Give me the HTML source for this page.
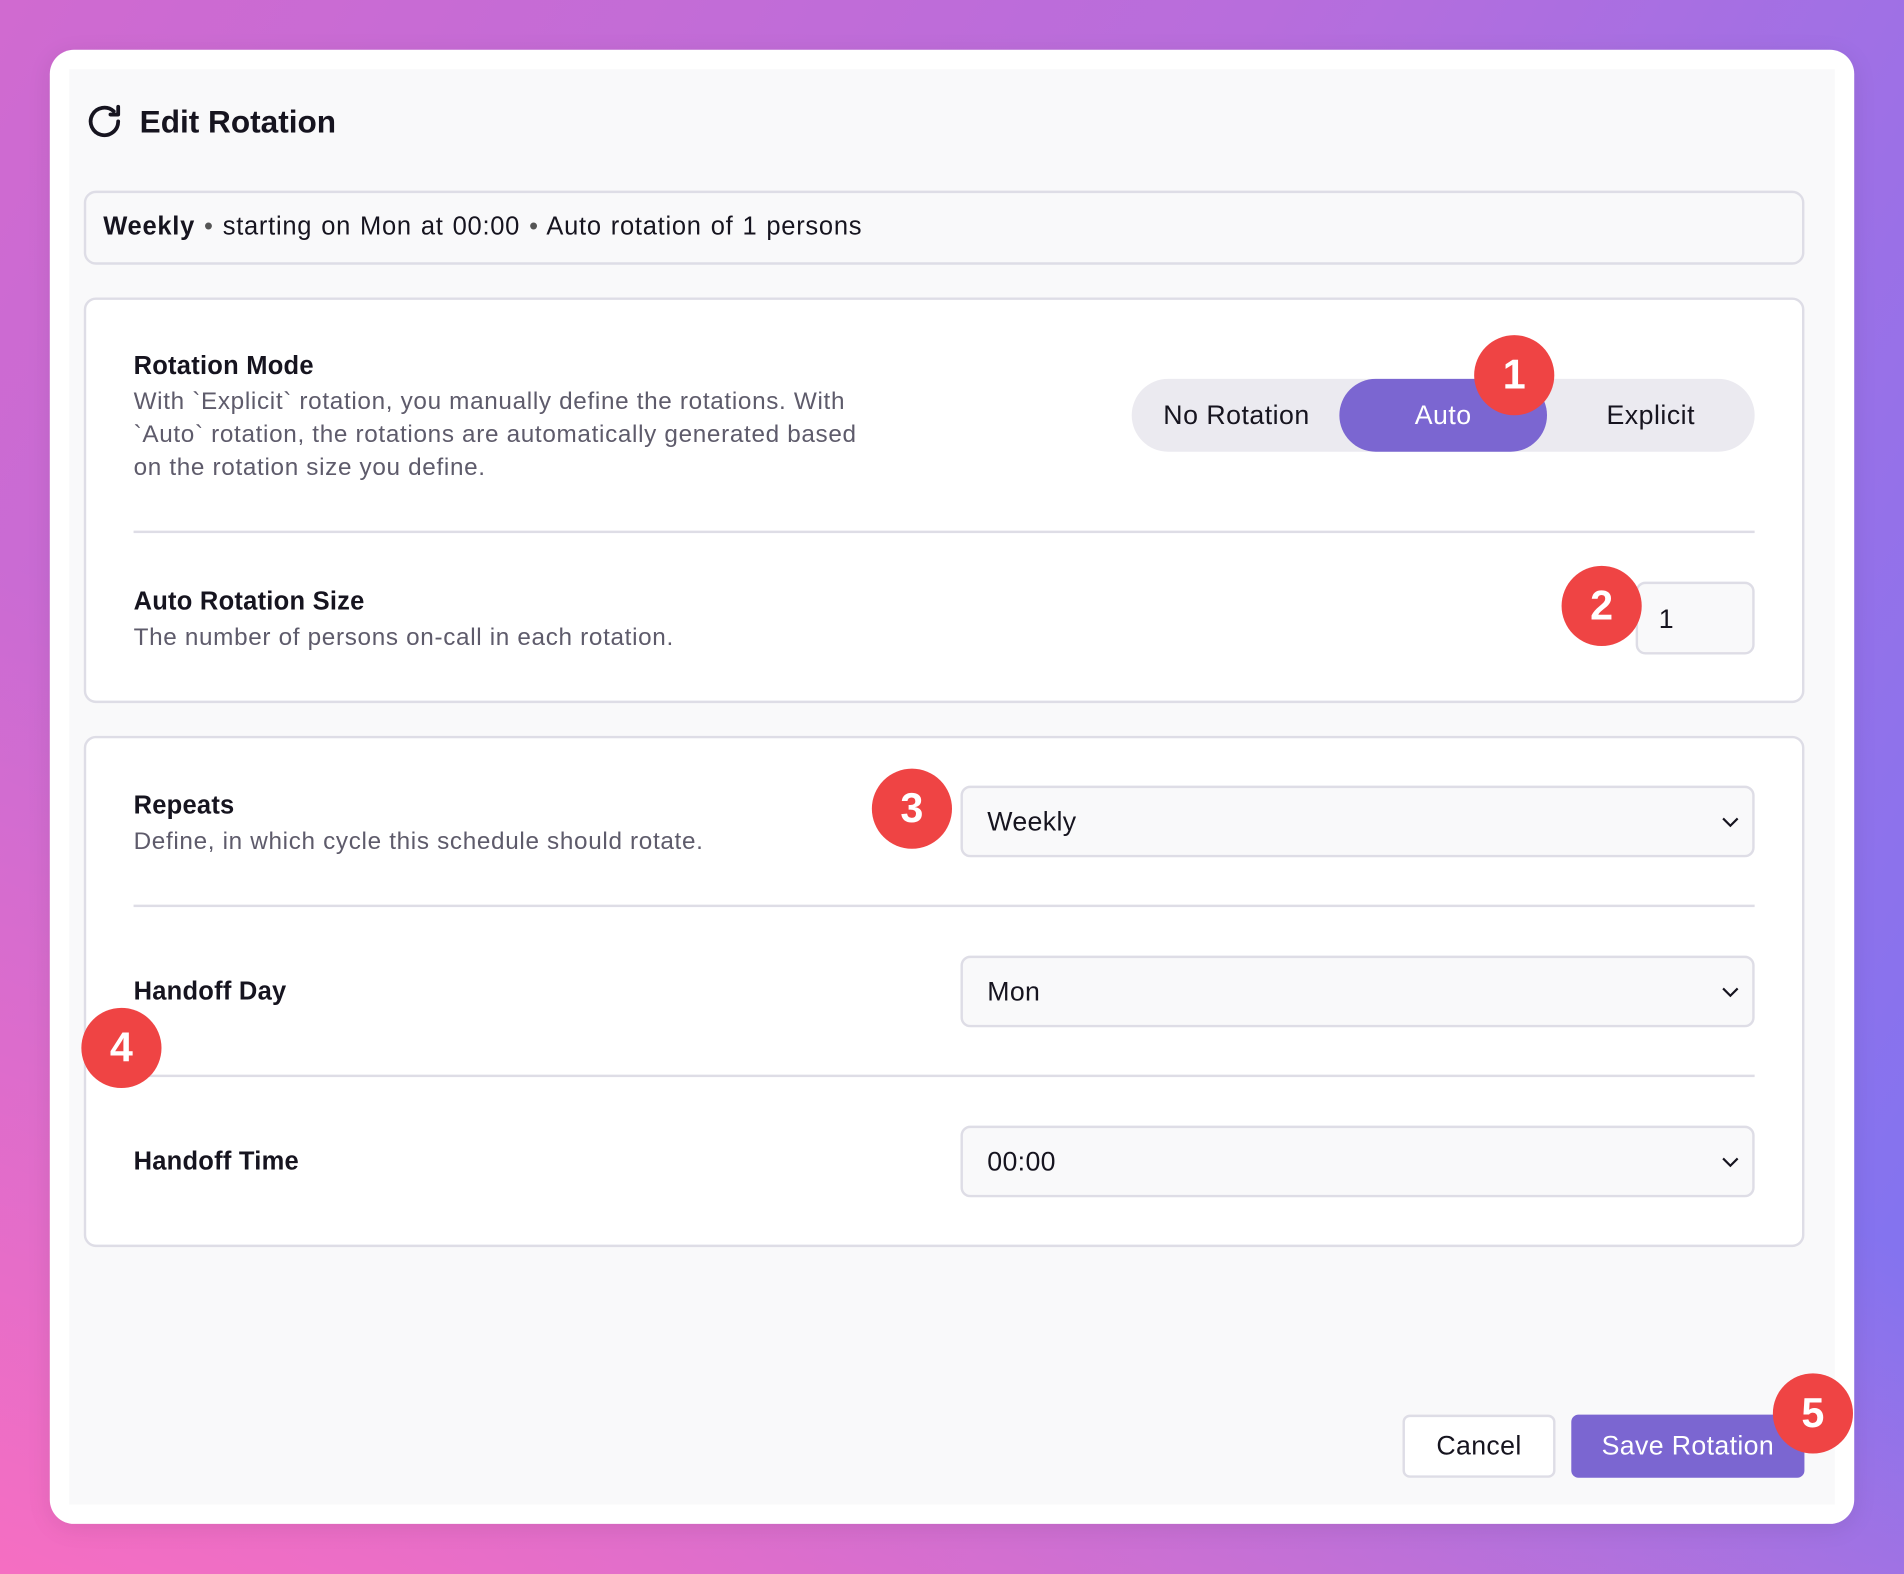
<!DOCTYPE html>
<html><head><meta charset="utf-8"><style>
*{box-sizing:border-box;margin:0;padding:0}
html,body{width:1904px;height:1574px;overflow:hidden}
body{background:linear-gradient(120deg,#d06ad0 0%,#b86ddc 45%,#7c74f2 100%);font-family:"Liberation Sans",sans-serif;color:#16141f;position:relative}
.bg2{position:absolute;inset:0;background:linear-gradient(20deg,rgba(255,110,190,.85) 0%,rgba(255,110,190,0) 45%)}
#s{position:absolute;left:0;top:0;width:1568px;height:1296px;transform:scale(1.21429);transform-origin:0 0}
.card{position:absolute;left:41px;top:41px;width:1486px;height:1214px;background:#fff;border-radius:20px;box-shadow:0 4px 20px rgba(0,0,0,.08)}
.panel{position:absolute;left:57px;top:57px;width:1454px;height:1182px;background:#f9f9fa}
.a{position:absolute}
.box{position:absolute;background:#fff;border:2px solid #dedde6;border-radius:10px}
.lbl{font-weight:bold;font-size:21px;letter-spacing:0.2px}
.desc{font-size:20px;color:#5e5b6b;line-height:27px;letter-spacing:0.55px}
.hr{position:absolute;height:2px;background:#dedde6;left:110px;width:1335px}
.sel{position:absolute;left:791px;width:654px;height:59px;border:2px solid #dedde6;border-radius:8px;background:#f9f9fa;font-size:22px;padding:15px 0 0 20px;letter-spacing:0.3px}
.sel svg{position:absolute;right:10px;top:20px}
.badge{position:absolute;width:66px;height:66px;border-radius:50%;background:#ef4444;color:#fff;font-weight:bold;font-size:34px;text-align:center;line-height:66px}
</style></head><body><div class="bg2"></div>
<div id="s">
<div class="card"></div><div class="panel"></div>
<svg class="a" style="left:69px;top:83px" width="34" height="34" viewBox="0 0 24 24" fill="none" stroke="#16141f" stroke-width="2.2" stroke-linecap="round" stroke-linejoin="round"><path d="M20 12a8 8 0 1 1-2.6-5.9"/><path d="M20 3.5v4.5h-4.5"/></svg>
<div class="a" style="left:115px;top:85px;font-size:26px;font-weight:bold">Edit Rotation</div>
<div class="box" style="left:69px;top:157px;width:1417px;height:61px;background:#f9f9fa;padding:16px 0 0 14px;font-size:21px;letter-spacing:0.6px;word-spacing:1px"><b>Weekly</b> <span style="color:#555">•</span> starting on Mon at 00:00 <span style="color:#555">•</span> Auto rotation of 1 persons</div>
<div class="box" style="left:69px;top:245px;width:1417px;height:334px"></div>
<div class="a lbl" style="left:110px;top:290px">Rotation Mode</div>
<div class="a desc" style="left:110px;top:318px;white-space:nowrap">With `Explicit` rotation, you manually define the rotations. With<br>`Auto` rotation, the rotations are automatically generated based<br>on the rotation size you define.</div>
<div class="a" style="left:932px;top:312px;width:513px;height:60px;background:#ebeaf0;border-radius:30px;font-size:22px;letter-spacing:0.4px">
<div class="a" style="left:26px;top:17px">No Rotation</div>
<div class="a" style="left:171px;top:0;width:171px;height:60px;background:#7b66d1;border-radius:30px;color:#fff;text-align:center;line-height:60px">Auto</div>
<div class="a" style="left:391px;top:17px">Explicit</div></div>
<div class="hr" style="top:437px"></div>
<div class="a lbl" style="left:110px;top:484px">Auto Rotation Size</div>
<div class="a desc" style="left:110px;top:512px">The number of persons on-call in each rotation.</div>
<div class="a" style="left:1347px;top:479px;width:98px;height:60px;border:2px solid #dedde6;border-radius:8px;background:#f9f9fa;font-size:22px;padding:16px 0 0 17px">1</div>
<div class="box" style="left:69px;top:606px;width:1417px;height:421px"></div>
<div class="a lbl" style="left:110px;top:652px">Repeats</div>
<div class="a desc" style="left:110px;top:680px">Define, in which cycle this schedule should rotate.</div>
<div class="sel" style="top:647px">Weekly<svg width="16" height="16" viewBox="0 0 16 16" fill="none" stroke="#16141f" stroke-width="1.8"><path d="M2 5l6 6 6-6"/></svg></div>
<div class="hr" style="top:745px"></div>
<div class="a lbl" style="left:110px;top:805px">Handoff Day</div>
<div class="sel" style="top:787px">Mon<svg width="16" height="16" viewBox="0 0 16 16" fill="none" stroke="#16141f" stroke-width="1.8"><path d="M2 5l6 6 6-6"/></svg></div>
<div class="hr" style="top:885px"></div>
<div class="a lbl" style="left:110px;top:945px">Handoff Time</div>
<div class="sel" style="top:927px">00:00<svg width="16" height="16" viewBox="0 0 16 16" fill="none" stroke="#16141f" stroke-width="1.8"><path d="M2 5l6 6 6-6"/></svg></div>
<div class="a" style="left:1155px;top:1165px;width:126px;height:52px;border:2px solid #dedde6;border-radius:6px;background:#fff;font-size:22px;text-align:center;line-height:48px;letter-spacing:0.3px">Cancel</div>
<div class="a" style="left:1294px;top:1165px;width:192px;height:52px;border-radius:6px;background:#7b66d1;color:#fff;font-size:22px;text-align:center;line-height:52px;letter-spacing:0.3px">Save Rotation</div>
<div class="badge" style="left:1214px;top:276px">1</div>
<div class="badge" style="left:1286px;top:466px">2</div>
<div class="badge" style="left:718px;top:633px">3</div>
<div class="badge" style="left:67px;top:830px">4</div>
<div class="badge" style="left:1460px;top:1131px">5</div>
</div></body></html>
